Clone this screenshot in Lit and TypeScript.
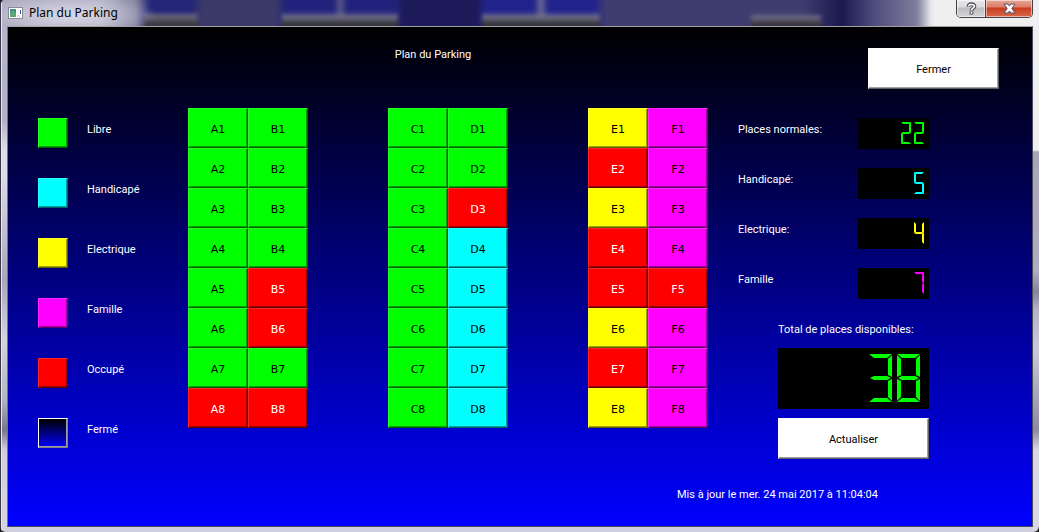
import { LitElement, html, css } from "lit";
import { customElement, property } from "lit/decorators.js";

type Kind = "libre" | "handicape" | "electrique" | "famille" | "occupe" | "ferme";

const SEGMENTS: Record<string, string> = {
  "0": "abcdef",
  "1": "bc",
  "2": "abdeg",
  "3": "abcdg",
  "4": "bcfg",
  "5": "acdfg",
  "6": "acdefg",
  "7": "abc",
  "8": "abcdefg",
  "9": "abcdfg",
};

@customElement("lcd-number")
class LcdNumber extends LitElement {
  @property({ type: Number }) value = 0;
  @property() label = "";

  static styles = css`
    :host {
      display: block;
      --w: 10px;
      --h: 22px;
      --t: 2px;
      --gap: 3px;
      --cut: 0px;
    }
    output {
      display: flex;
      justify-content: flex-end;
      gap: var(--gap);
    }
    .digit {
      position: relative;
      width: var(--w);
      height: var(--h);
    }
    .seg {
      position: absolute;
      background: currentColor;
    }
    .a, .d, .g {
      left: 0;
      right: 0;
      height: var(--t);
    }
    .a {
      top: 0;
      clip-path: polygon(0 0, 100% 0, calc(100% - var(--t) - var(--cut)) 100%, calc(var(--t) + var(--cut)) 100%);
    }
    .d {
      bottom: 0;
      clip-path: polygon(calc(var(--t) + var(--cut)) 0, calc(100% - var(--t) - var(--cut)) 0, 100% 100%, 0 100%);
    }
    .g {
      top: calc(50% - var(--t) / 2);
      clip-path: polygon(var(--cut) 50%, calc(var(--t) + var(--cut)) 0, calc(100% - var(--t) - var(--cut)) 0, calc(100% - var(--cut)) 50%, calc(100% - var(--t) - var(--cut)) 100%, calc(var(--t) + var(--cut)) 100%);
    }
    .b, .c, .e, .f {
      width: var(--t);
      height: 50%;
    }
    .b, .c { right: 0; }
    .e, .f { left: 0; }
    .b, .f { top: 0; }
    .c, .e { bottom: 0; }
    .f { clip-path: polygon(0 var(--cut), 100% calc(var(--t) + var(--cut)), 100% calc(100% - var(--t) / 2 - var(--cut)), 0 calc(100% - var(--cut))); }
    .b { clip-path: polygon(100% var(--cut), 0 calc(var(--t) + var(--cut)), 0 calc(100% - var(--t) / 2 - var(--cut)), 100% calc(100% - var(--cut))); }
    .e { clip-path: polygon(0 var(--cut), 100% calc(var(--t) / 2 + var(--cut)), 100% calc(100% - var(--t) - var(--cut)), 0 calc(100% - var(--cut))); }
    .c { clip-path: polygon(100% var(--cut), 0 calc(var(--t) / 2 + var(--cut)), 0 calc(100% - var(--t) - var(--cut)), 100% calc(100% - var(--cut))); }
  `;

  render() {
    return html`<output aria-label="${this.label} ${this.value}">${[...String(this.value)].map(
      (d) => html`<span class="digit">${[...SEGMENTS[d]].map((s) => html`<span class="seg ${s}"></span>`)}</span>`
    )}</output>`;
  }
}

const LEGEND: { kind: Kind; label: string }[] = [
  { kind: "libre", label: "Libre" },
  { kind: "handicape", label: "Handicapé" },
  { kind: "electrique", label: "Electrique" },
  { kind: "famille", label: "Famille" },
  { kind: "occupe", label: "Occupé" },
  { kind: "ferme", label: "Fermé" },
];

const ROWS: Record<string, string> = {
  A: "LLLLLLLO",
  B: "LLLLOOLO",
  C: "LLLLLLLL",
  D: "LLOHHHHH",
  E: "EOEOOEOE",
  F: "FFFFOFFF",
};

const KINDS: Record<string, Kind> = {
  L: "libre",
  H: "handicape",
  E: "electrique",
  F: "famille",
  O: "occupe",
};

const BLOCKS = [["A", "B"], ["C", "D"], ["E", "F"]];

const COUNTS: { kind: Kind; label: string; value: number }[] = [
  { kind: "libre", label: "Places normales:", value: 22 },
  { kind: "handicape", label: "Handicapé:", value: 5 },
  { kind: "electrique", label: "Electrique:", value: 4 },
  { kind: "famille", label: "Famille", value: 7 },
];

@customElement("app-root")
class AppRoot extends LitElement {
  static styles = css`
    :host {
      display: block;
      min-height: 100vh;
      background: #222;
      font: 11px/14px Roboto, "Noto Sans", sans-serif;
      color: #fff;
    }
    * { box-sizing: border-box; }
    .window {
      display: flex;
      flex-direction: column;
      min-height: 100vh;
      padding: 0 6px 5px 7px;
      border-radius: 6px 0 6px 6px;
      background:
        linear-gradient(to right, #3a3a4a 0 1px, #e8e6f2 1px 2px, transparent 2px) 0 0 / 7px 100% no-repeat,
        linear-gradient(#b9b4cc 0, #b4b0c8 120px, #dedee8 150px 170px, #aaa6bc 280px, #d4d4de 340px, #b4b4c2 400px, #77778a 430px, #cfcfdc 450px, #d4d4e0) 0 0 / 7px 100% no-repeat,
        linear-gradient(#efeff0 0 150px, #a8a6b6 152px, #b0aebe 270px, #85839a 292px, #b6b4c4 310px, #c8c8d8 350px, #8c8aa0 430px, #d8d8e4 450px) 100% 0 / 6px 100% no-repeat,
        #d0d0e0;
    }
    .titlebar {
      position: relative;
      isolation: isolate;
      overflow: hidden;
      display: flex;
      align-items: flex-start;
      height: 26px;
      margin: 0 -6px 0 -5px;
      padding: 0 6px 0 6px;
      color: #000;
      font: 12px/16px "Noto Sans", sans-serif;
    }
    /* Blurred desktop showing through the glass frame */
    .titlebar::before {
      content: "";
      position: absolute;
      z-index: -1;
      inset: -6px 0 -12px;
      filter: blur(2px);
      background:
        linear-gradient(to right, transparent 915px, #efeff0 930px),
        radial-gradient(ellipse 90px 20px at 66px 21px, rgba(225, 225, 238, 0.85), transparent),
        linear-gradient(to bottom, transparent 18px, #6e6d80 22px, #3a3940 29px) 142px 0 / 54px 100% no-repeat,
        linear-gradient(to bottom, transparent 18px, #77768c 23px, #36353c 29px) 280px 0 / 116px 100% no-repeat,
        linear-gradient(to bottom, transparent 18px, #77768c 23px, #36353c 29px) 480px 0 / 118px 100% no-repeat,
        linear-gradient(to bottom, transparent 20px, #77758c 23px, #3a3440 29px) 749px 0 / 70px 100% no-repeat,
        linear-gradient(to right, #aca9bf 0, #b2b0c4 100px, #8886a2 134px, #242478 148px, #242478 190px, #3a3968 200px, #3a3968 274px, #22227c 284px, #22227c 332px, #5c5a88 338px, #22227c 345px, #22227c 394px, #1c1a58 402px, #1c1a58 474px, #22228c 484px, #22228c 532px, #6c6a90 539px, #22228c 546px, #22228c 592px, #3f3d70 604px, #3f3d70 800px, #1b184f 840px, #4c4a7a 870px, #7f7d9c 915px);
    }
    .appicon { margin: 7px 6px 0 0; }
    .titlebar h1 {
      margin: 5px 0 0;
      font: inherit;
      flex: 1;
    }
    .controls {
      display: flex;
      height: 18px;
      border: 1px solid #44424a;
      border-top: 0;
      border-radius: 0 0 5px 5px;
      overflow: hidden;
    }
    .controls button {
      display: grid;
      place-items: center;
      border: 0;
      padding: 0;
      width: 28px;
      background: linear-gradient(#e8e8ea, #dcdcde 7px, #bdbdc0 8px, #d6d6d8);
      box-shadow: inset 0 0 0 1px rgba(255, 255, 255, 0.5);
    }
    .controls .close {
      width: 47px;
      border-left: 1px solid #44424a;
      background: linear-gradient(#e8a898, #dc7c68 7px, #c83c20 8px, #dc6848);
    }
    .client {
      flex: 1;
      border: 1px solid #48485a;
      border-top-color: #a0a0a0;
      border-left-color: #707088;
      background: linear-gradient(#000, #00f);
      padding: 21px 33px 24px 30px;
      display: flex;
      flex-direction: column;
    }
    .head, .plan, .foot {
      display: grid;
      grid-template-columns: 150fr 200fr 200fr 150fr 261fr;
    }
    .head { margin-bottom: 19px; }
    .head h2 {
      grid-column: 3;
      width: 90px;
      margin: 0;
      font: inherit;
      text-align: center;
    }
    .head .push {
      grid-column: 5;
      justify-self: end;
      width: 131px;
    }
    .push {
      height: 41px;
      border: 1px solid;
      border-color: #fff #606060 #606060 #fff;
      box-shadow: inset -1px -1px 0 #a0a0a0;
      background: #fff;
      color: #000;
      font: inherit;
      padding: 2px 0 0;
    }
    .legend {
      list-style: none;
      margin: 0;
      padding: 10px 0 0;
      display: flex;
      flex-direction: column;
      gap: 30px;
    }
    .legend li {
      display: flex;
      gap: 19px;
      height: 30px;
      line-height: 24px;
    }
    .swatch {
      width: 30px;
      height: 30px;
    }
    .libre { --c: #0f0; --hi: #26ff26; --lo: #00a000; --edge: #006000; --ink: #000; }
    .handicape { --c: #0ff; --hi: #26ffff; --lo: #00a0a0; --edge: #006060; --ink: #000; }
    .electrique { --c: #ff0; --hi: #ffff26; --lo: #a0a000; --edge: #606000; --ink: #000; }
    .famille { --c: #f0f; --hi: #ff26ff; --lo: #a000a0; --edge: #600060; --ink: #000; }
    .occupe { --c: #f00; --hi: #ff2626; --lo: #a00000; --edge: #600000; --ink: #fff; }
    .ferme { --c: linear-gradient(#000, #00f); --hi: #fff; --lo: #a0a0a0; --edge: #808080; --ink: #fff; }
    .swatch, .place {
      border: 1px solid;
      border-color: var(--hi) var(--edge) var(--edge) var(--hi);
      box-shadow: inset -1px -1px 0 var(--lo);
      background: var(--c);
      color: var(--ink);
    }
    .block {
      display: grid;
      grid-template-columns: 60px 60px;
      grid-auto-rows: 40px;
      align-content: start;
    }
    .place {
      font: 11px/14px "DejaVu Sans", sans-serif;
      padding: 4px 0 0;
    }
    .info {
      width: 191px;
      padding-top: 10px;
      display: flex;
      flex-direction: column;
    }
    .count {
      display: flex;
      justify-content: space-between;
      height: 31px;
      margin-bottom: 19px;
      line-height: 24px;
    }
    .count lcd-number {
      width: 71px;
      height: 31px;
      padding: 4px 5px 0 0;
      background: #000;
      color: var(--c);
    }
    .total {
      align-self: flex-end;
      width: 151px;
      display: flex;
      flex-direction: column;
      line-height: 24px;
    }
    .total lcd-number {
      --w: 23px;
      --h: 48px;
      --t: 4px;
      --gap: 5px;
      --cut: 1px;
      height: 61px;
      margin: 6px 0 9px;
      padding: 6px 9px 0 0;
      background: #000;
      color: #0f0;
    }
    .foot p {
      grid-column: 4 / -1;
      margin: 29px 0 0;
      padding-left: 89px;
    }
  `;

  render() {
    return html`
      <div class="window">
        <header class="titlebar">
          <svg class="appicon" width="15" height="12" viewBox="0 0 15 12" aria-hidden="true">
            <rect x=".5" y=".5" width="14" height="11" fill="#fff" stroke="#8a8a92" />
            <rect x="2" y="2" width="6" height="8" fill="#3f8f8c" />
            <path d="M2 10V6l3-3 3 4v3z" fill="#5aa878" />
            <rect x="12" y="3" width="1" height="4" fill="#2b55b0" />
            <rect x="9" y="8" width="3" height="2" fill="#d8d8dc" />
          </svg>
          <h1>Plan du Parking</h1>
          <div class="controls">
            <button aria-label="Aide">
              <svg width="11" height="13" viewBox="0 0 11 13">
                <path d="M2.5 4.8C2.5 1.4 8.5 1.4 8.5 4.3C8.5 6.4 5.5 6 5.5 8.8M5.5 9.5v3" fill="none" stroke="#50505e" stroke-width="3.8" />
                <path d="M2.5 4.3C2.5 1.8 8.4 1.8 8.4 4.3C8.4 6.3 5.5 6 5.5 8.4M5.5 10v1.8" fill="none" stroke="#fff" stroke-width="1.6" />
              </svg>
            </button>
            <button class="close" aria-label="Fermer la fenêtre">
              <svg width="13" height="11" viewBox="0 0 13 11">
                <path d="M1 1h4l1.5 2L8 1h4L8.8 5.5 12 10H8L6.5 8 5 10H1l3.200-4.500z" fill="#fff" stroke="#54506a" />
              </svg>
            </button>
          </div>
        </header>
        <main class="client">
          <div class="head">
            <h2>Plan du Parking</h2>
            <button class="push">Fermer</button>
          </div>
          <div class="plan">
            <ul class="legend">
              ${LEGEND.map((l) => html`<li><span class="swatch ${l.kind}"></span><span>${l.label}</span></li>`)}
            </ul>
            ${BLOCKS.map(
              (cols) => html`<div class="block">
                ${[...Array(8).keys()].map((i) =>
                  cols.map((c) => html`<button class="place ${KINDS[ROWS[c][i]]}">${c}${i + 1}</button>`)
                )}
              </div>`
            )}
            <section class="info">
              ${COUNTS.map(
                (c) => html`<div class="count">
                  <span>${c.label}</span>
                  <lcd-number class=${c.kind} .value=${c.value} .label=${c.label}></lcd-number>
                </div>`
              )}
              <div class="total">
                <span>Total de places disponibles:</span>
                <lcd-number .value=${38} .label=${"Total"}></lcd-number>
                <button class="push">Actualiser</button>
              </div>
            </section>
          </div>
          <div class="foot"><p>Mis à jour le mer. 24 mai 2017 à 11:04:04</p></div>
        </main>
      </div>
    `;
  }
}
